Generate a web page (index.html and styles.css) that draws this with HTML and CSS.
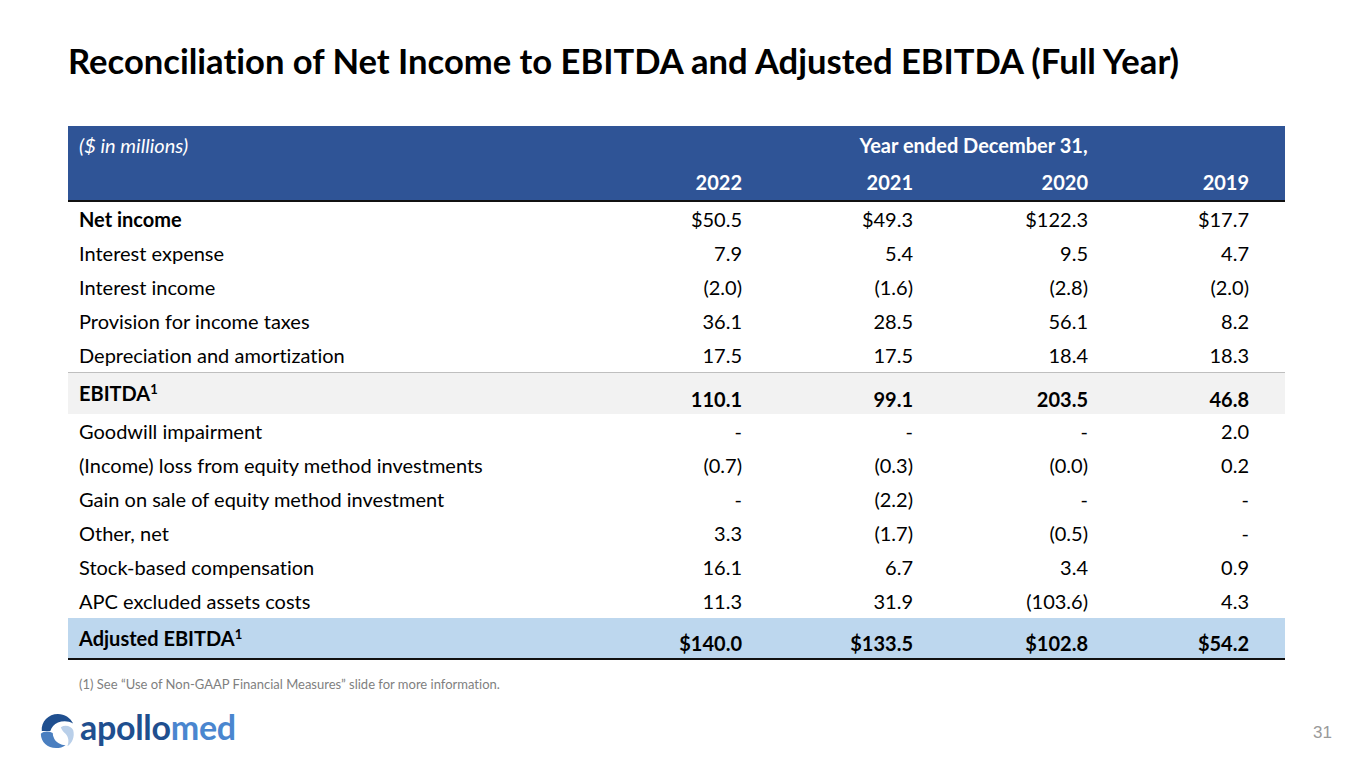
FILE: index.html
```html
<!DOCTYPE html>
<html>
<head>
<meta charset="utf-8">
<link rel="stylesheet" href="styles.css">
</head>
<body>
<div class="slide">
  <h1 class="title">Reconciliation of Net Income to EBITDA and Adjusted EBITDA (Full Year)</h1>
  <table class="recon">
    <colgroup>
      <col class="c-label"><col class="c1"><col class="c2"><col class="c3"><col class="c4">
    </colgroup>
    <thead>
      <tr class="h1">
        <th class="units">($ in millions)</th>
        <th colspan="4" class="span">Year ended December 31,</th>
      </tr>
      <tr class="h2">
        <th></th>
        <th class="num">2022</th>
        <th class="num">2021</th>
        <th class="num">2020</th>
        <th class="num">2019</th>
      </tr>
    </thead>
    <tbody>
      <tr><td class="strong">Net income</td><td class="num">$50.5</td><td class="num">$49.3</td><td class="num">$122.3</td><td class="num">$17.7</td></tr>
      <tr><td>Interest expense</td><td class="num">7.9</td><td class="num">5.4</td><td class="num">9.5</td><td class="num">4.7</td></tr>
      <tr><td>Interest income</td><td class="num">(2.0)</td><td class="num">(1.6)</td><td class="num">(2.8)</td><td class="num">(2.0)</td></tr>
      <tr><td>Provision for income taxes</td><td class="num">36.1</td><td class="num">28.5</td><td class="num">56.1</td><td class="num">8.2</td></tr>
      <tr><td>Depreciation and amortization</td><td class="num">17.5</td><td class="num">17.5</td><td class="num">18.4</td><td class="num">18.3</td></tr>
      <tr class="total ebitda"><td class="tl">EBITDA<sup>1</sup></td><td class="num">110.1</td><td class="num">99.1</td><td class="num">203.5</td><td class="num">46.8</td></tr>
      <tr><td>Goodwill impairment</td><td class="num">-</td><td class="num">-</td><td class="num">-</td><td class="num">2.0</td></tr>
      <tr><td>(Income) loss from equity method investments</td><td class="num">(0.7)</td><td class="num">(0.3)</td><td class="num">(0.0)</td><td class="num">0.2</td></tr>
      <tr><td>Gain on sale of equity method investment</td><td class="num">-</td><td class="num">(2.2)</td><td class="num">-</td><td class="num">-</td></tr>
      <tr><td>Other, net</td><td class="num">3.3</td><td class="num">(1.7)</td><td class="num">(0.5)</td><td class="num">-</td></tr>
      <tr><td>Stock-based compensation</td><td class="num">16.1</td><td class="num">6.7</td><td class="num">3.4</td><td class="num">0.9</td></tr>
      <tr><td>APC excluded assets costs</td><td class="num">11.3</td><td class="num">31.9</td><td class="num">(103.6)</td><td class="num">4.3</td></tr>
      <tr class="total adjusted"><td class="tl">Adjusted EBITDA<sup>1</sup></td><td class="num">$140.0</td><td class="num">$133.5</td><td class="num">$102.8</td><td class="num">$54.2</td></tr>
    </tbody>
  </table>
  <p class="footnote">(1) See “Use of Non-GAAP Financial Measures” slide for more information.</p>
  <div class="footer">
    <div class="logo">
      <svg class="logo-mark" width="38" height="40" viewBox="0 0 40 42">
        <path d="M4 21 C3 11 11 3 21 3 C28 3 34 7 37 13 C32 10 26 10 21 12 C17 14 14 17 13 21 Z" fill="#1f4f8f"/>
        <path d="M3 24 C3 33 10 39 19 39 C23 39 26 38 29 36 C24 36 19 33 17 29 C16 27 15.5 25 15.5 23 C11 21 6 21 3 24 Z" fill="#4a7fc0"/>
        <path d="M24 17 C29 14 35 16 37 20 C39 27 36 34 31 37 C33 32 32 27 29 24 C27 22 25 20 24 17 Z" fill="#b9cfe9"/>
      </svg>
      <span class="logo-text"><span class="apollo">apollo</span><span class="med">med</span></span>
    </div>
    <div class="pagenum">31</div>
  </div>
</div>
</body>
</html>
```

FILE: styles.css
```css
html, body {
  margin: 0;
  padding: 0;
  background: #ffffff;
}
body {
  font-family: Lato, "Open Sans", "Liberation Sans", sans-serif;
  color: #000000;
  font-variant-ligatures: none;
}
.slide {
  width: 1365px;
  height: 768px;
  position: relative;
  box-sizing: border-box;
  padding: 40px 80px 0 68px;
  display: flex;
  flex-direction: column;
}
.title {
  margin: 0;
  font-size: 34.6px;
  font-weight: 700;
  line-height: 42px;
  color: #000;
}
.recon {
  margin-top: 44px;
  width: 1217px;
  border-collapse: collapse;
  table-layout: fixed;
  font-size: 20px;
}
.c-label { width: 540px; }
.c1 { width: 170px; }
.c2 { width: 171px; }
.c3 { width: 175px; }
.c4 { width: 161px; }
.recon th, .recon td {
  padding: 0 36px 0 11px;
  line-height: 24px;
  white-space: nowrap;
}
.recon thead th {
  background: #2f5496;
  color: #ffffff;
  font-weight: 700;
  text-align: left;
}
.recon thead .units {
  font-style: italic;
  font-weight: 400;
}
.recon .h1 th { height: 38px; vertical-align: middle; }
.recon .h1 .span { text-align: center; padding-left: 54px; padding-right: 0; }
.recon .h2 th { height: 36px; border-bottom: 2px solid #111; }
.recon .num { text-align: right; }
.recon tbody td { height: 34px; }
.recon td.strong { font-weight: 700; }
.recon tr.total td {
  height: 41px;
  font-weight: 700;
  vertical-align: bottom;
  padding-bottom: 3px;
  box-sizing: border-box;
}
.recon tr.total td.tl {
  vertical-align: top;
  padding-top: 8px;
  padding-bottom: 0;
}
.recon tr.ebitda td {
  background: #f2f2f2;
  border-top: 1px solid #bfbfbf;
}
.recon tr.adjusted td {
  background: #bdd7ee;
  border-bottom: 2px solid #111;
}
.recon sup {
  font-size: 13px;
  line-height: 0;
  vertical-align: 7px;
}
.footnote {
  margin: 16px 0 0 11px;
  font-size: 13px;
  color: #7f7f7f;
  line-height: 16px;
}
.footer {
  position: absolute;
  left: 38px;
  right: 33px;
  top: 711px;
  display: flex;
  justify-content: space-between;
  align-items: center;
}
.logo {
  display: flex;
  align-items: center;
  gap: 4px;
}
.logo-mark { display: block; }
.logo-text {
  font-family: Lato, "Open Sans", sans-serif;
  font-weight: 700;
  font-size: 34px;
  letter-spacing: -0.3px;
  line-height: 36px;
  margin-top: -8px;
}
.apollo { color: #1f4f8f; }
.med { color: #4a86cf; }
.pagenum {
  font-family: "Liberation Sans", Arial, sans-serif;
  font-size: 17px;
  color: #9a9a9a;
  margin-top: 4px;
}
```
